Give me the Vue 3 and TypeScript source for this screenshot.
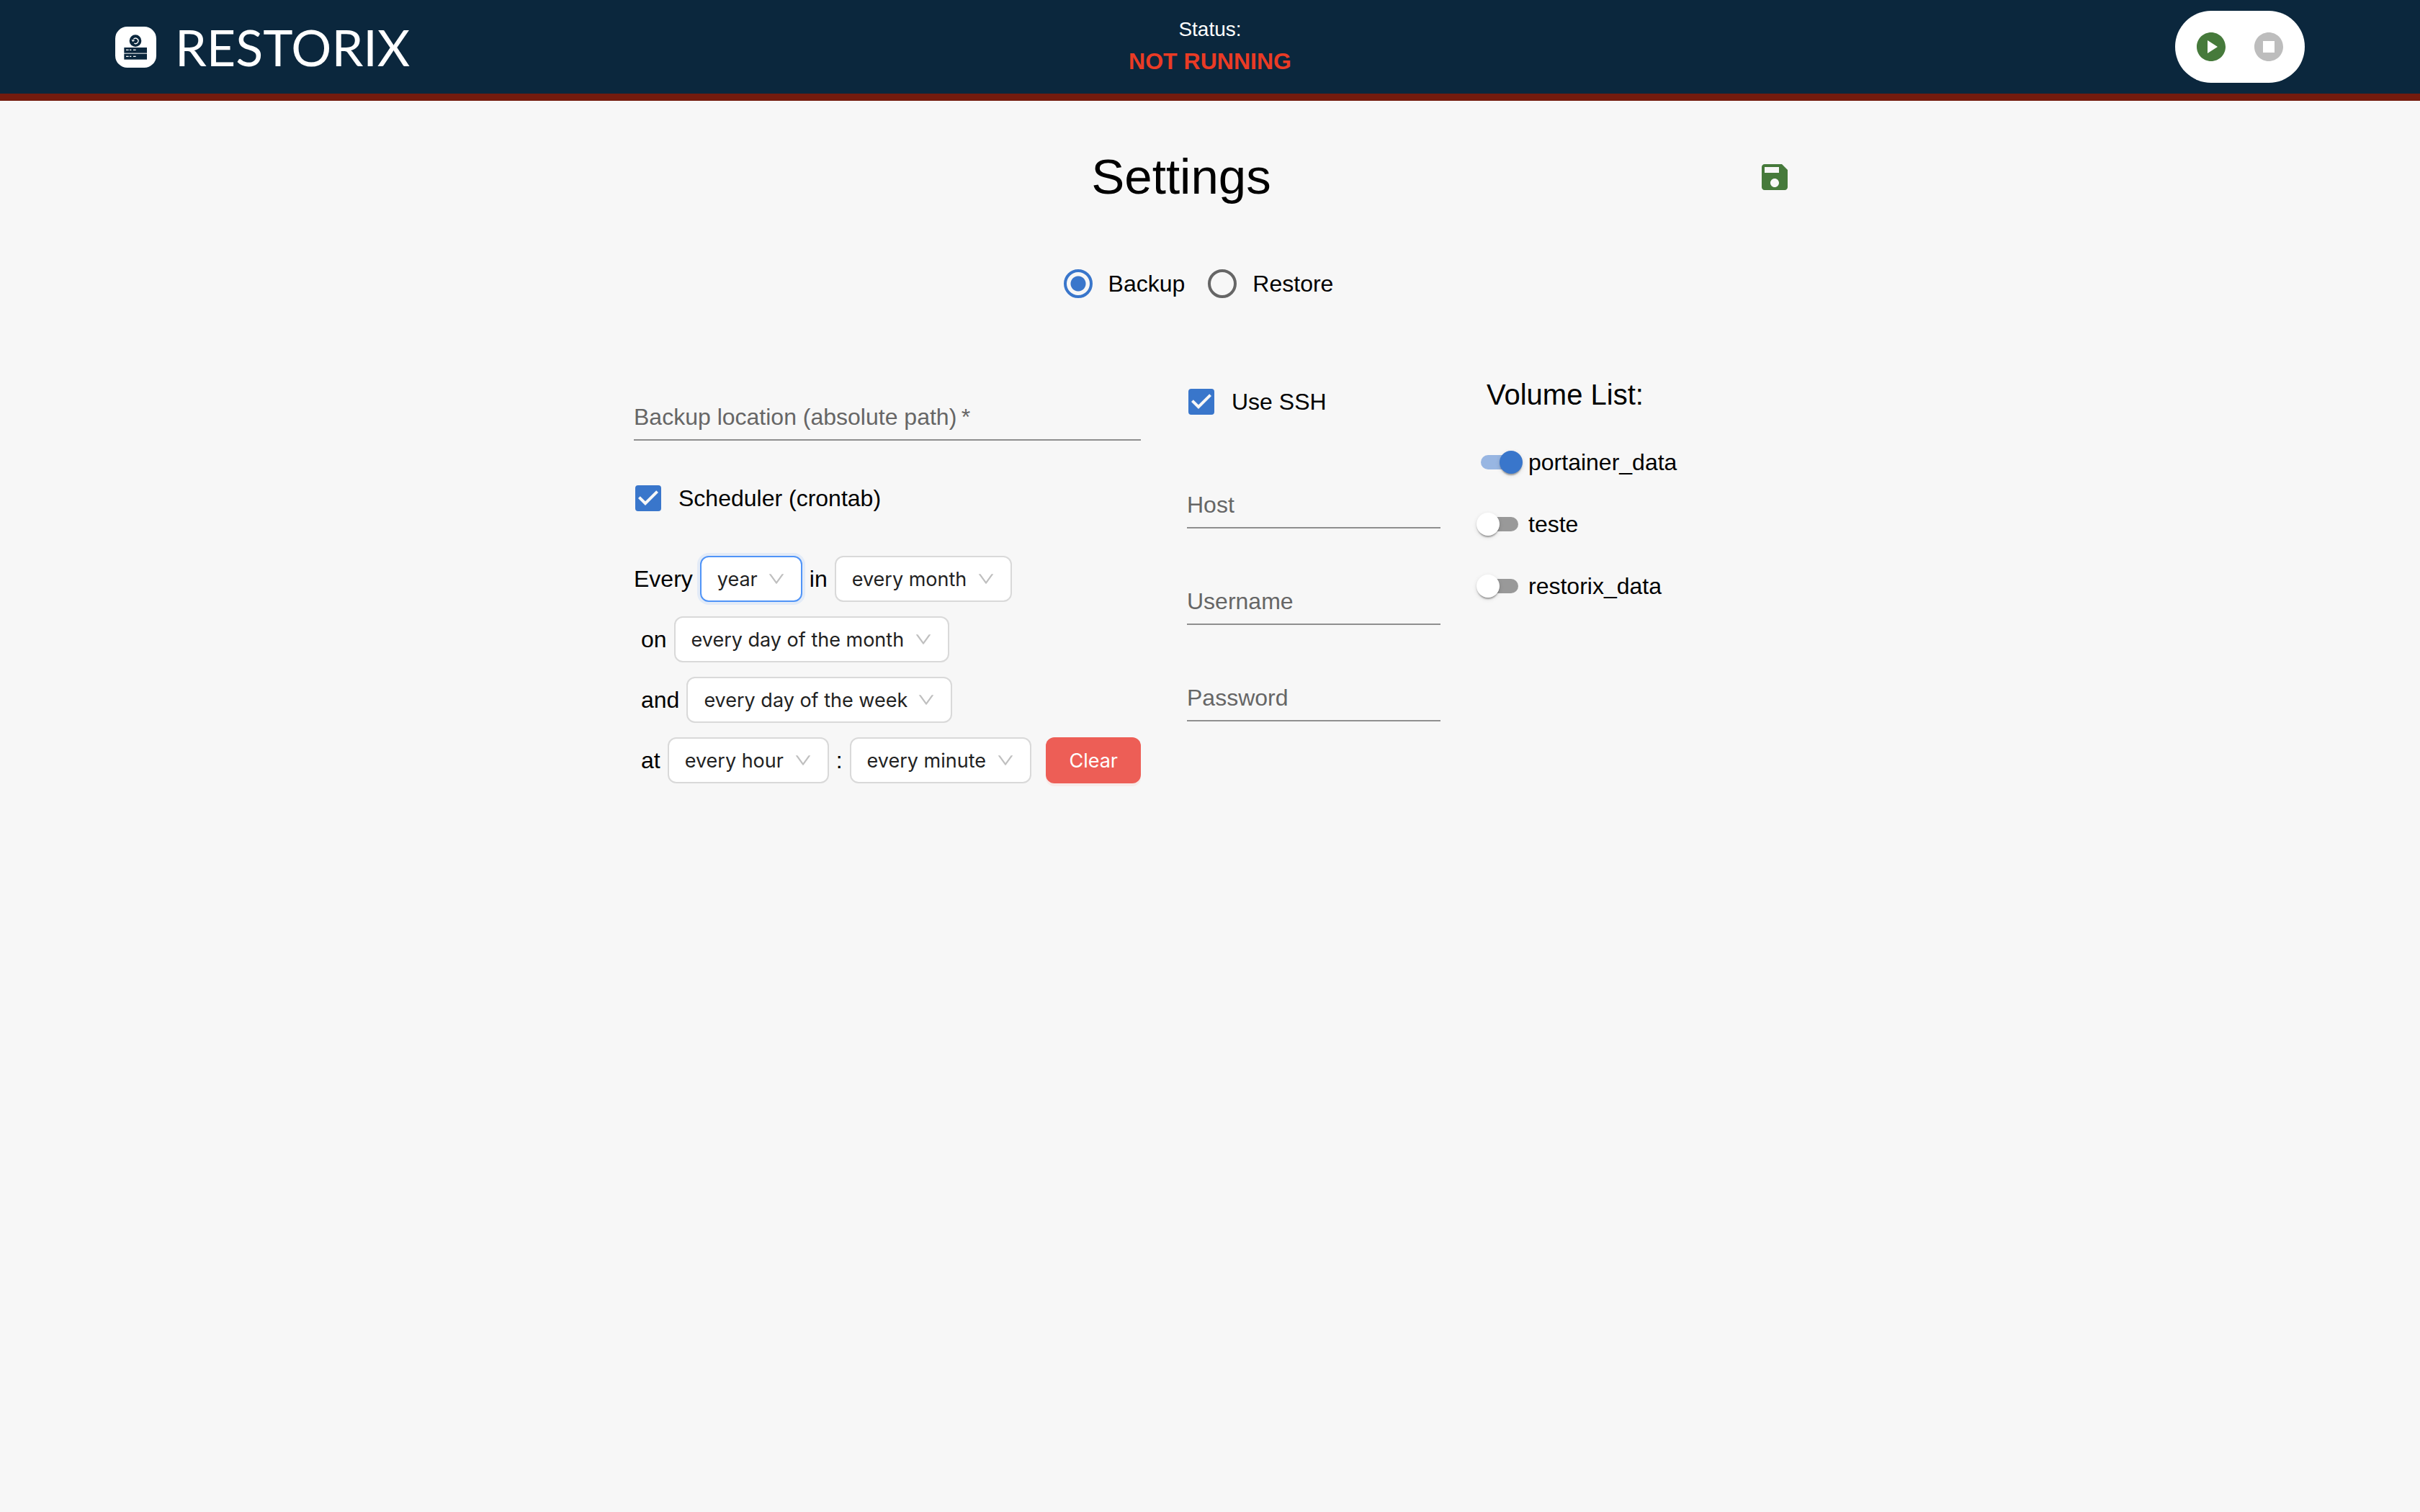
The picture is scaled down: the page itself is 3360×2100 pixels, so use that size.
<script setup lang="ts">
import { reactive, ref } from 'vue'

interface CronPart {
  id: string
  before: string
  value: string
  focused?: boolean
}

interface Field {
  id: string
  label: string
  type: string
}

interface Volume {
  name: string
  enabled: boolean
}

const mode = ref<'backup' | 'restore'>('backup')
const location = ref('')
const scheduler = ref(true)
const useSsh = ref(true)
const running = ref(false)

const cronRows: CronPart[][] = [
  [
    { id: 'period', before: 'Every', value: 'year', focused: true },
    { id: 'month', before: 'in', value: 'every month' },
  ],
  [{ id: 'month-day', before: 'on', value: 'every day of the month' }],
  [{ id: 'week-day', before: 'and', value: 'every day of the week' }],
  [
    { id: 'hour', before: 'at', value: 'every hour' },
    { id: 'minute', before: ':', value: 'every minute' },
  ],
]

const sshFields: Field[] = [
  { id: 'host', label: 'Host', type: 'text' },
  { id: 'username', label: 'Username', type: 'text' },
  { id: 'password', label: 'Password', type: 'password' },
]

const ssh = reactive<Record<string, string>>({ host: '', username: '', password: '' })

const volumes = reactive<Volume[]>([
  { name: 'portainer_data', enabled: true },
  { name: 'teste', enabled: false },
  { name: 'restorix_data', enabled: false },
])
</script>

<template>
  <header class="topbar">
    <a class="brand" href="#">
      <svg class="brand-icon" viewBox="0 0 171 171" aria-hidden="true">
        <rect width="171" height="171" rx="50" fill="#fff" />
        <circle cx="84" cy="59" r="25" fill="#0b273d" />
        <path d="M76 53a11 11 0 1 1 3 16" fill="none" stroke="#fff" stroke-width="4" />
        <path d="M68 54l5 9 9-6z" fill="#fff" />
        <rect x="37" y="87" width="95" height="23" fill="#0b273d" />
        <rect x="37" y="113" width="95" height="24" fill="#0b273d" />
        <path
          d="M45 97h11M60 97h7M75 97h11M45 124h11M60 124h7M75 124h11"
          stroke="#fff"
          stroke-width="4"
        />
      </svg>
      <span class="brand-name">RESTORIX</span>
    </a>
    <div class="status">
      <span class="status-label">Status:</span>
      <strong class="status-value">NOT RUNNING</strong>
    </div>
    <div class="actions">
      <button class="icon-button start" type="button" aria-label="Start" @click="running = true">
        <svg viewBox="0 0 24 24" aria-hidden="true">
          <path d="M12 2C6.48 2 2 6.48 2 12s4.48 10 10 10 10-4.48 10-10S17.52 2 12 2zM9.500 16.500v-9l7 4.500z" />
        </svg>
      </button>
      <button class="icon-button stop" type="button" aria-label="Stop" :disabled="!running">
        <svg viewBox="0 0 24 24" aria-hidden="true">
          <path d="M12 2C6.480 2 2 6.480 2 12s4.480 10 10 10 10-4.480 10-10S17.520 2 12 2zm4 14H8V8h8v8z" />
        </svg>
      </button>
    </div>
  </header>

  <main class="page">
    <div class="title-row">
      <h1 class="title">Settings</h1>
      <button class="icon-button save" type="button" aria-label="Save">
        <svg viewBox="0 0 24 24" aria-hidden="true">
          <path
            d="M17 3H5c-1.110 0-2 .9-2 2v14c0 1.100.89 2 2 2h14c1.100 0 2-.9 2-2V7l-4-4zm-5 16c-1.660 0-3-1.340-3-3s1.340-3 3-3 3 1.340 3 3-1.340 3-3 3zm3-10H5V5h10v4z"
          />
        </svg>
      </button>
    </div>

    <div class="modes" role="radiogroup" aria-label="Mode">
      <label class="choice">
        <input v-model="mode" class="radio" type="radio" name="mode" value="backup" />
        <span>Backup</span>
      </label>
      <label class="choice">
        <input v-model="mode" class="radio" type="radio" name="mode" value="restore" />
        <span>Restore</span>
      </label>
    </div>

    <form class="columns" @submit.prevent>
      <section class="column">
        <div class="field">
          <input id="location" v-model="location" type="text" required />
          <label for="location">Backup location (absolute path)&thinsp;*</label>
        </div>
        <label class="choice">
          <span class="check">
            <input v-model="scheduler" type="checkbox" />
            <svg v-if="scheduler" viewBox="0 0 24 24" aria-hidden="true">
              <path d="M10 17l-5-5 1.410-1.410L10 14.170l7.590-7.590L19 8l-9 9z" />
            </svg>
          </span>
          <span>Scheduler (crontab)</span>
        </label>
        <div class="cron">
          <div v-for="(row, i) in cronRows" :key="i" class="cron-row">
            <template v-for="part in row" :key="part.id">
              <label :for="part.id">{{ part.before }}</label>
              <span class="select" :class="{ focused: part.focused }">
                <select :id="part.id">
                  <option>{{ part.value }}</option>
                </select>
                <svg viewBox="64 64 896 896" aria-hidden="true">
                  <path
                    d="M884 256h-75c-5.100 0-9.900 2.500-12.900 6.600L512 654.200 227.900 262.600c-3-4.100-7.800-6.600-12.900-6.600h-75c-6.500 0-10.300 7.400-6.500 12.700l352.600 486.100c12.800 17.600 39 17.600 51.700 0l352.600-486.100c3.900-5.300.1-12.700-6.400-12.700z"
                  />
                </svg>
              </span>
            </template>
            <button v-if="i === cronRows.length - 1" class="clear" type="button">Clear</button>
          </div>
        </div>
      </section>

      <section class="column">
        <label class="choice">
          <span class="check">
            <input v-model="useSsh" type="checkbox" />
            <svg v-if="useSsh" viewBox="0 0 24 24" aria-hidden="true">
              <path d="M10 17l-5-5 1.410-1.410L10 14.170l7.590-7.590L19 8l-9 9z" />
            </svg>
          </span>
          <span>Use SSH</span>
        </label>
        <div v-for="field in sshFields" :key="field.id" class="field">
          <input :id="field.id" v-model="ssh[field.id]" :type="field.type" />
          <label :for="field.id">{{ field.label }}</label>
        </div>
      </section>

      <section class="column">
        <h2 class="list-title">Volume List:</h2>
        <label v-for="volume in volumes" :key="volume.name" class="volume">
          <input v-model="volume.enabled" class="switch" type="checkbox" role="switch" />
          <span>{{ volume.name }}</span>
        </label>
      </section>
    </form>
  </main>
</template>

<style>
body {
  margin: 0;
  background: #f7f7f7;
}
</style>

<style scoped>
.topbar,
.page {
  font-family: "Liberation Sans", Arial, sans-serif;
  font-size: 32px;
  line-height: 48px;
  color: #000;
  box-sizing: border-box;
}

.topbar {
  display: grid;
  grid-template-columns: 1fr auto 1fr;
  align-items: center;
  height: 140px;
  padding: 0 160px;
  background: #0b273d;
  border-bottom: 10px solid #741b0e;
}

.brand {
  display: flex;
  align-items: center;
  gap: 26px;
  color: #fff;
  text-decoration: none;
}

.brand-icon {
  width: 57px;
  height: 57px;
}

.brand-name {
  font-family: Lato, sans-serif;
  font-size: 70px;
  line-height: 80px;
}

.status {
  display: flex;
  flex-direction: column;
  align-items: center;
}

.status-label {
  font-size: 28px;
  line-height: 40px;
  color: #fff;
}

.status-value {
  color: #ea3b25;
}

.actions {
  display: flex;
  justify-self: end;
  padding: 10px;
  background: #fff;
  border-radius: 50px;
}

.icon-button {
  display: block;
  width: 80px;
  height: 80px;
  padding: 16px;
  border: 0;
  background: none;
  color: #467a3b;
}

.icon-button svg {
  display: block;
  width: 48px;
  height: 48px;
  fill: currentColor;
}

.stop {
  color: #bdbdbd;
}

.page {
  max-width: 1648px;
  margin: 0 auto;
  padding: 66px 0;
}

.title-row {
  display: flex;
  align-items: center;
  margin-bottom: 66px;
}

.title {
  flex: 1;
  margin: 0;
  font-size: 69px;
  line-height: 80px;
  font-weight: 400;
  text-align: center;
}

.modes {
  display: flex;
  justify-content: center;
  margin-bottom: 80px;
}

.choice {
  display: flex;
  align-items: center;
  height: 84px;
  margin-left: -22px;
  margin-right: 32px;
}

.radio {
  appearance: none;
  box-sizing: border-box;
  width: 40px;
  height: 40px;
  margin: 22px;
  border: 4px solid #666;
  border-radius: 50%;
}

.radio:checked {
  border-color: #3976cb;
  background: radial-gradient(circle, #3976cb 10px, transparent 11px);
}

.check {
  display: grid;
  margin: 18px;
}

.check input,
.check svg {
  grid-area: 1 / 1;
}

.check input {
  appearance: none;
  box-sizing: border-box;
  width: 36px;
  height: 36px;
  margin: 6px;
  border: 4px solid #666;
  border-radius: 4px;
}

.check input:checked {
  border-color: #3976cb;
  background: #3976cb;
}

.check svg {
  width: 48px;
  height: 48px;
  fill: #f7f7f7;
  pointer-events: none;
}

.columns {
  display: grid;
  grid-template-columns: minmax(0, 22fr) minmax(0, 11fr) minmax(0, 13fr);
  column-gap: 64px;
  padding: 0 24px;
}

.column {
  display: flex;
  flex-direction: column;
  gap: 38px;
}

.field {
  position: relative;
  padding-top: 32px;
}

.field input {
  display: block;
  box-sizing: border-box;
  width: 100%;
  height: 64px;
  padding: 8px 0;
  border: 0;
  border-bottom: 2px solid #8f8f8f;
  border-radius: 0;
  outline: 0;
  background: none;
  font: inherit;
  box-shadow: none;
}

.field label {
  position: absolute;
  left: 0;
  bottom: 9px;
  color: #666;
  white-space: nowrap;
  pointer-events: none;
}

.cron {
  display: flex;
  flex-direction: column;
  gap: 20px;
}

.cron-row {
  display: flex;
  align-items: center;
  gap: 10px;
  padding-left: 10px;
  white-space: nowrap;
}

.cron-row:first-child {
  padding-left: 0;
}

.select {
  display: grid;
  align-items: center;
}

.select select,
.select svg {
  grid-area: 1 / 1;
}

.select select {
  appearance: none;
  box-sizing: border-box;
  height: 64px;
  padding: 0 60px 0 22px;
  border: 2px solid #d9d9d9;
  border-radius: 12px;
  outline: 0;
  background: #fff;
  color: #222;
  font-family: Inter, sans-serif;
  font-size: 27px;
}

.select.focused select {
  border-color: #5094f7;
  box-shadow: 0 0 0 4px #e3ebf7;
}

.select svg {
  justify-self: end;
  width: 24px;
  height: 24px;
  margin-right: 24px;
  fill: #bfbfbf;
  pointer-events: none;
}

.clear {
  height: 64px;
  margin-left: auto;
  padding: 0 32px;
  border: 0;
  border-radius: 12px;
  background: #ed5e56;
  box-shadow: 0 4px 0 #f8eae8;
  color: #fff;
  font-family: Inter, sans-serif;
  font-size: 27px;
}

.list-title {
  margin: 0;
  font-size: 40px;
  line-height: 64px;
  font-weight: 400;
}

.volume {
  display: flex;
  align-items: center;
  gap: 8px;
  height: 48px;
  margin-left: -14px;
}

.switch {
  appearance: none;
  position: relative;
  width: 64px;
  height: 32px;
  margin: 0;
}

.switch::before {
  content: "";
  position: absolute;
  inset: 6px;
  border-radius: 10px;
  background: #999;
}

.switch::after {
  content: "";
  position: absolute;
  top: 0;
  left: 0;
  width: 32px;
  height: 32px;
  border-radius: 50%;
  background: #fff;
  box-shadow: 0 4px 2px -2px rgba(0, 0, 0, 0.2), 0 2px 2px rgba(0, 0, 0, 0.14),
    0 2px 6px rgba(0, 0, 0, 0.12);
}

.switch:checked::before {
  background: #98b6e2;
}

.switch:checked::after {
  left: 32px;
  background: #3976cb;
}
</style>
